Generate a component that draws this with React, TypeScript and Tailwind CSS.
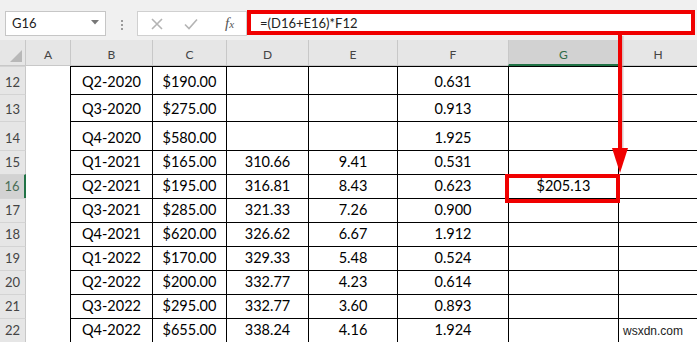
import React from "react";

type Row = {
  n: number;
  h: string;
  b: string;
  c: string;
  d: string;
  e: string;
  f: string;
  g?: string;
};

const rows: Row[] = [
  { n: 12, h: "h-[28px]", b: "Q2-2020", c: "$190.00", d: "", e: "", f: "0.631" },
  { n: 13, h: "h-[27px]", b: "Q3-2020", c: "$275.00", d: "", e: "", f: "0.913" },
  { n: 14, h: "h-[29px]", b: "Q4-2020", c: "$580.00", d: "", e: "", f: "1.925" },
  { n: 15, h: "h-[24px]", b: "Q1-2021", c: "$165.00", d: "310.66", e: "9.41", f: "0.531" },
  { n: 16, h: "h-[24px]", b: "Q2-2021", c: "$195.00", d: "316.81", e: "8.43", f: "0.623", g: "$205.13" },
  { n: 17, h: "h-[24px]", b: "Q3-2021", c: "$285.00", d: "321.33", e: "7.26", f: "0.900" },
  { n: 18, h: "h-[24px]", b: "Q4-2021", c: "$620.00", d: "326.62", e: "6.67", f: "1.912" },
  { n: 19, h: "h-[24px]", b: "Q1-2022", c: "$170.00", d: "329.33", e: "5.48", f: "0.524" },
  { n: 20, h: "h-[24px]", b: "Q2-2022", c: "$200.00", d: "332.77", e: "4.23", f: "0.614" },
  { n: 21, h: "h-[24px]", b: "Q3-2022", c: "$295.00", d: "332.77", e: "3.60", f: "0.893" },
  { n: 22, h: "h-[24px]", b: "Q4-2022", c: "$655.00", d: "338.24", e: "4.16", f: "1.924" },
];

const cols = [
  { k: "A", w: "w-[44px]" },
  { k: "B", w: "w-[82px]" },
  { k: "C", w: "w-[74px]" },
  { k: "D", w: "w-[82px]" },
  { k: "E", w: "w-[89px]" },
  { k: "F", w: "w-[111px]" },
  { k: "G", w: "w-[110px]" },
  { k: "H", w: "flex-1" },
];

function Cell({ w, children }: { w: string; children?: React.ReactNode }) {
  return (
    <div
      className={`${w} shrink-0 h-full border-l border-t border-black bg-white flex items-end justify-center pb-[2px] text-[14.5px] leading-[20px] text-black`}
    >
      {children}
    </div>
  );
}

export default function App() {
  return (
    <div
      className="relative w-[697px] h-[342px] overflow-hidden bg-white"
      style={{ fontFamily: "Lato, 'Open Sans', sans-serif" }}
    >
      {/* Formula bar */}
      <div className="h-[40px] bg-[#f0f0f0] flex items-start pt-[10px] pl-[5px] pr-[2px]">
        <div className="mt-[1px] w-[101px] h-[25px] bg-white border border-[#c6c6c6] flex items-center pl-[6px] pr-[6px] pt-[1px] text-[13px] text-[#222]">
          <span className="flex-1">G16</span>
          <svg width="8" height="5" viewBox="0 0 8 5" className="mt-[-3px]">
            <polygon points="0,0 8,0 4,4.5" fill="#777" />
          </svg>
        </div>
        <div className="w-[31px] h-[27px] flex flex-col items-center justify-center gap-[2px] mt-[1px]">
          <div className="w-[2px] h-[2px] bg-[#9a9a9a]" />
          <div className="w-[2px] h-[2px] bg-[#9a9a9a]" />
          <div className="w-[2px] h-[2px] bg-[#9a9a9a]" />
        </div>
        <div className="mt-[1px] w-[110px] h-[25px] bg-white border border-[#d0d0d0] flex items-center">
          <svg width="12" height="12" viewBox="0 0 12 12" className="ml-[13px]">
            <path d="M1 1 L11 11 M11 1 L1 11" stroke="#b4b4b4" strokeWidth="1.6" />
          </svg>
          <svg width="14" height="12" viewBox="0 0 14 12" className="ml-[21px]">
            <path d="M1 6.5 L5 10.5 L13 1.5" stroke="#b4b4b4" strokeWidth="1.6" fill="none" />
          </svg>
          <span
            className="ml-[27px] text-[15px] italic text-[#555]"
            style={{ fontFamily: "'Liberation Serif', serif" }}
          >
            f<span className="text-[11px]">x</span>
          </span>
        </div>
        <div className="flex-1 h-[25px] bg-white border-[4px] border-[#f00000] flex items-center pl-[9px] pt-[2px] text-[13px] text-[#222]">
          =(D16+E16)*F12
        </div>
      </div>

      {/* Column headers */}
      <div className="h-[26px] flex bg-[#e6e6e6]">
        <div className="w-[26px] h-full border-r border-b border-[#c8c8c8] flex items-end justify-end pr-[3px] pb-[3px]">
          <svg width="12" height="12" viewBox="0 0 12 12">
            <polygon points="12,0 12,12 0,12" fill="#b8b8b8" />
          </svg>
        </div>
        {cols.map((c, i) => (
          <div
            key={c.k}
            className={`${c.w} shrink-0 h-full flex items-center justify-center pt-[5px] text-[12px] ${
              i > 0 ? "border-l border-[#c8c8c8]" : ""
            } ${c.k === "G" ? "bg-[#d2d2d2] border-b-2 border-b-[#217346] text-[#2f6b47]" : "border-b border-b-[#c8c8c8] text-[#444]"}`}
          >
            {c.k}
          </div>
        ))}
      </div>

      {/* Rows */}
      {rows.map((r) => (
        <div key={r.n} className={`${r.h} flex`}>
          <div
            className={`w-[26px] shrink-0 h-full flex items-end justify-center pb-[2px] text-[13px] leading-[20px] border-t border-[#d4d4d4] ${
              r.n === 16
                ? "bg-[#d2d2d2] border-r-2 border-r-[#217346] text-[#4a6e57]"
                : "bg-[#e6e6e6] border-r border-r-[#c8c8c8] text-[#444]"
            }`}
          >
            {r.n}
          </div>
          <div className="w-[44px] shrink-0 h-full bg-white" />
          <Cell w="w-[82px]">{r.b}</Cell>
          <Cell w="w-[74px]">{r.c}</Cell>
          <Cell w="w-[82px]">{r.d}</Cell>
          <Cell w="w-[89px]">{r.e}</Cell>
          <Cell w="w-[111px]">{r.f}</Cell>
          <Cell w="w-[110px]">{r.g}</Cell>
          <Cell w="flex-1" />
        </div>
      ))}

      {/* Annotations */}
      <svg className="absolute left-0 top-0 pointer-events-none" width="697" height="342">
        <rect x="622" y="36" width="1.5" height="114" fill="#c9a0a0" opacity="0.6" />
        <rect x="618" y="35" width="4" height="115" fill="#f00000" />
        <polygon points="612,148 628,148 620,173" fill="#f00000" />
      </svg>
      <div className="absolute left-[505px] top-[174px] w-[115px] h-[29px] border-[4px] border-[#f00000] pointer-events-none" />
      <div
        className="absolute left-[623px] top-[325px] text-[12px] leading-[12px] text-[#222]"
        style={{ fontFamily: "'Liberation Sans', Arial, sans-serif" }}
      >
        wsxdn.com
      </div>
    </div>
  );
}
